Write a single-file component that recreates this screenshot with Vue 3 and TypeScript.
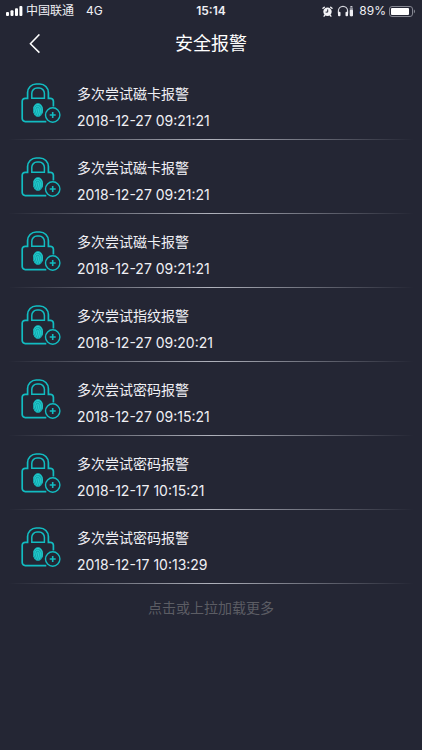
<script setup lang="ts">
interface Alarm {
  id: number
  title: string
  time: string
}

const alarms: Alarm[] = [
  { id: 1, title: '多次尝试磁卡报警', time: '2018-12-27 09:21:21' },
  { id: 2, title: '多次尝试磁卡报警', time: '2018-12-27 09:21:21' },
  { id: 3, title: '多次尝试磁卡报警', time: '2018-12-27 09:21:21' },
  { id: 4, title: '多次尝试指纹报警', time: '2018-12-27 09:20:21' },
  { id: 5, title: '多次尝试密码报警', time: '2018-12-27 09:15:21' },
  { id: 6, title: '多次尝试密码报警', time: '2018-12-17 10:15:21' },
  { id: 7, title: '多次尝试密码报警', time: '2018-12-17 10:13:29' },
]
</script>

<template>
  <div class="screen">
    <div class="status">
      <div class="status-side">
        <svg class="signal" width="17" height="10" viewBox="0 0 17 10" aria-hidden="true">
          <rect x="0" y="6" width="3" height="4" rx="1" />
          <rect x="4.5" y="4.2" width="3" height="5.8" rx="1" />
          <rect x="9" y="2.2" width="3" height="7.8" rx="1" />
          <rect x="13.4" y="0" width="3" height="10" rx="1" />
        </svg>
        <span class="carrier">中国联通</span>
        <span>4G</span>
      </div>
      <span class="clock">15:14</span>
      <div class="status-side status-right">
        <svg width="11" height="11" viewBox="0 0 11 11" aria-hidden="true">
          <circle cx="5.5" cy="5.8" r="4.2" fill="#f4f4f7" />
          <path d="M1 2.3 2.3 1.2M10 2.3 8.7 1.2M2.7 9.3l-.6.8M8.3 9.3l.6.8" stroke="#f4f4f7" stroke-width="1.4" stroke-linecap="round" />
          <path d="M5.7 3.4v2.7H3.6" fill="none" stroke="#242634" stroke-width="1" />
        </svg>
        <svg class="headset" width="17" height="12" viewBox="0 0 17 12" aria-hidden="true">
          <path d="M1.4 8.5V6a4.6 4.6 0 0 1 9.2 0v2.5" fill="none" stroke="#d5d6dc" stroke-width="1.2" />
          <rect x="1" y="6.8" width="2.5" height="4.4" rx="1" fill="#f0f0f4" />
          <rect x="8.5" y="6.8" width="2.5" height="4.4" rx="1" fill="#f0f0f4" />
          <path d="M13.4 2.2V1h2v1.2" fill="#c5c6ce" />
          <rect x="12.8" y="2.2" width="3.2" height="9" rx="1" fill="#8c8e99" />
          <rect x="12.8" y="4.8" width="3.2" height="6.4" rx="1" fill="#eeeef2" />
        </svg>
        <span class="percent">89%</span>
        <svg width="27" height="11" viewBox="0 0 27 11" aria-hidden="true">
          <rect x=".5" y=".5" width="23" height="10" rx="2.5" fill="none" stroke="#858792" />
          <rect x="2" y="2" width="18" height="7" rx="1" fill="#fff" />
          <path d="M24.8 3.6c1.6.4 1.6 3.4 0 3.8z" fill="#858792" />
        </svg>
      </div>
    </div>

    <header class="header">
      <button class="back" type="button" aria-label="返回">
        <svg width="12" height="20" viewBox="0 0 12 20" aria-hidden="true">
          <path d="M10.4 .4 1.4 9.7 10.4 18.6" fill="none" stroke="#fff" stroke-width="1.5" />
        </svg>
      </button>
      <h1>安全报警</h1>
    </header>

    <main>
      <ul class="list">
        <li v-for="alarm in alarms" :key="alarm.id" class="row">
          <svg class="lock" width="40" height="42" viewBox="0 0 40 42" fill="none" stroke="#12bcc1" aria-hidden="true">
            <path d="M25.3 38.6H4.2a3 3 0 0 1-3-3V18.3a3 3 0 0 1 3-3H6.6V9.6A8.6 8.6 0 0 1 15.2 1h3.6a8.6 8.6 0 0 1 8.6 8.6v5.7h2a3 3 0 0 1 3 3v5.3" stroke-width="1.7" />
            <path d="M10.8 15.3v-5A5.2 5.2 0 0 1 16 5.1h2.2a5.2 5.2 0 0 1 5.2 5.2v5z" stroke-width="1.5" />
            <ellipse cx="17" cy="27" rx="5" ry="7" fill="#12a9af" stroke="none" />
            <path d="M12.7 25.5c.4-5.4 8.2-5.4 8.6 0l-.2 4.8M12.6 29.5c1.5-1.4 1.2-3.5 1.9-5 1.2-2.1 4.5-1.2 4.8 1.5.2 2.2-.2 4.4-1.1 6.6M13.8 31.8c2-1.8 1.7-4 2.2-6 .4-.9 1.5-.6 1.6.5.1 2.4-.5 4.8-2 6.8" stroke="#2bd6d5" stroke-width=".8" />
            <circle cx="31.7" cy="32" r="7.2" stroke-width="1.4" />
            <path d="M28.7 32h6M31.7 29v6" stroke-width="1.6" />
          </svg>
          <div class="info">
            <span class="title">{{ alarm.title }}</span>
            <time class="time">{{ alarm.time }}</time>
          </div>
        </li>
      </ul>
      <button class="more" type="button">点击或上拉加载更多</button>
    </main>
  </div>
</template>

<style>
body {
  margin: 0;
  background: #242634;
}
</style>

<style scoped>
.screen {
  min-height: 100vh;
  background: #242634;
  color: #f0f0f4;
  font-family: Inter, "Noto Sans CJK SC", sans-serif;
}

.status {
  display: flex;
  align-items: center;
  height: 22px;
  padding: 0 6px;
  font-size: 12px;
  line-height: 20px;
}

.status-side {
  display: flex;
  flex: 1;
  align-items: center;
}

.status-right {
  justify-content: flex-end;
}

.signal {
  fill: #fff;
}

.carrier {
  margin: 0 12px 0 3px;
}

.clock {
  font-weight: 600;
}

.headset {
  margin-left: 4px;
}

.percent {
  margin: 0 3px 0 5px;
}

.header {
  display: grid;
  grid-template-columns: 48px 1fr 48px;
  align-items: center;
  height: 43px;
}

.back {
  display: flex;
  justify-content: flex-end;
  padding: 0 7px 0 0;
  border: 0;
  background: none;
}

h1 {
  margin: 0;
  font-size: 18px;
  font-weight: 400;
  line-height: 24px;
  text-align: center;
  color: #fff;
}

.list {
  margin: 0;
  padding: 1px 0 0;
  list-style: none;
}

.row {
  display: flex;
  align-items: flex-start;
  gap: 16px;
  padding: 16px 21px 7px;
  background: linear-gradient(90deg, transparent 2%, #b0b2bc 50%, transparent 98%) bottom / 100% 1px no-repeat;
}

.row + .row {
  margin-top: 0;
}

.lock {
  margin-top: 1px;
}

.info {
  display: flex;
  flex-direction: column;
  gap: 3px;
}

.title,
.time {
  font-size: 14px;
  line-height: 24px;
}

.more {
  display: block;
  margin: 12px auto 0;
  padding: 0;
  border: 0;
  background: none;
  color: #5c5d64;
  font-family: inherit;
  font-size: 14px;
  line-height: 24px;
}
</style>
